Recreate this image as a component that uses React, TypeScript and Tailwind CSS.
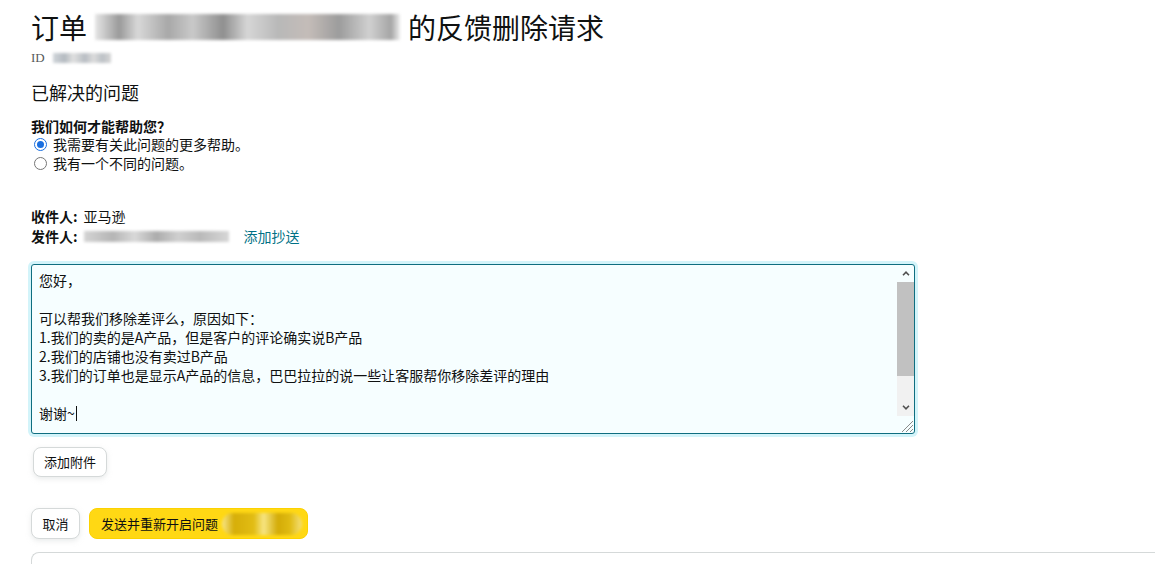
import React from 'react';

const font = { fontFamily: '"Noto Sans CJK SC", "Liberation Sans", sans-serif' };

const message = [
  '您好，',
  '',
  '可以帮我们移除差评么，原因如下：',
  '1.我们的卖的是A产品，但是客户的评论确实说B产品',
  '2.我们的店铺也没有卖过B产品',
  '3.我们的订单也是显示A产品的信息，巴巴拉拉的说一些让客服帮你移除差评的理由',
  '',
];

function Radio({ checked, label }: { checked?: boolean; label: string }) {
  return (
    <div className="flex h-[19px] items-center leading-[19px]">
      <span
        className={`ml-[3px] mr-[6px] flex h-[13px] w-[13px] items-center justify-center rounded-full bg-white ${
          checked ? 'border-[1.5px] border-[#1a6fe0]' : 'border border-[#767676]'
        }`}
      >
        {checked && <span className="h-[7px] w-[7px] rounded-full bg-[#1a6fe0]" />}
      </span>
      <span>{label}</span>
    </div>
  );
}

function Blur({ className }: { className: string }) {
  return <span className={`inline-block blur-[1.5px] ${className}`} />;
}

export default function App() {
  return (
    <div className="min-h-screen bg-white pl-[31px] pt-[9px] text-[14px] text-[#0f1111]" style={font}>
      {/* Header */}
      <h1 className="flex h-[36px] items-center text-[28px] leading-[36px] font-normal">
        <span>订单</span>
        <Blur className="mx-[8px] h-[26px] w-[305px] bg-[linear-gradient(90deg,#e6e6e6_0%,#9a9a9a_8%,#d8d8d8_14%,#a8a8a8_24%,#c9c9c9_32%,#8f8f8f_42%,#d6d6d6_50%,#b8b8b8_60%,#c4bcb8_70%,#9c9c9c_80%,#d0d0d0_90%,#a5a5a5_97%,#eeeeee_100%)]" />
        <span>的反馈删除请求</span>
      </h1>
      <div className="mt-[4px] flex h-[18px] items-center text-[#565959]" style={{ fontFamily: '"Liberation Serif", serif' }}>
        <span className="text-[13px]">ID</span>
        <Blur className="ml-[8px] h-[10px] w-[58px] bg-[linear-gradient(90deg,#d0d5da_0%,#b4bac0_20%,#e0e0e0_35%,#b8bdc3_55%,#dcdcdc_70%,#bcc1c6_85%,#d6d6d6_100%)]" />
      </div>

      <h2 className="mt-[13px] h-[24px] text-[18px] leading-[24px] font-normal">已解决的问题</h2>

      {/* Question */}
      <div className="mt-[13px] h-[18px] font-bold leading-[18px]">我们如何才能帮助您？</div>
      <Radio checked label="我需要有关此问题的更多帮助。" />
      <Radio label="我有一个不同的问题。" />

      {/* Recipients */}
      <div className="mt-[33px] leading-[20px]">
        <div className="flex h-[20px] items-center">
          <span className="font-bold">收件人:</span>
          <span className="ml-[6px]">亚马逊</span>
        </div>
        <div className="flex h-[20px] items-center">
          <span className="font-bold">发件人:</span>
          <Blur className="ml-[6px] h-[11px] w-[145px] bg-[linear-gradient(90deg,#d4d4d4_0%,#b5b5b5_20%,#d9d9d9_35%,#acacac_50%,#cfcfcf_65%,#b9b9b9_80%,#d6d6d6_100%)]" />
          <span className="ml-[15px] text-[#007185]">添加抄送</span>
        </div>
      </div>

      {/* Message box */}
      <div className="mt-[18px] flex h-[170px] w-[884px] overflow-hidden rounded-[3px] border border-[#0f6e80] bg-[#f6feff] shadow-[0_0_0_3px_#d3f4fa]">
        <div className="flex-1 pl-[7px] pt-[6px] leading-[19px]">
          {message.map((line, i) => (
            <div key={i} className="h-[19px]">
              {line}
            </div>
          ))}
          <div className="flex h-[19px] items-center">
            谢谢~<span className="ml-[1px] h-[15px] w-[1px] bg-[#0f1111]" />
          </div>
        </div>
        <div className="flex w-[17px] flex-col">
          <div className="flex h-[17px] items-center justify-center text-[#505050]">
            <svg width="8" height="5" viewBox="0 0 8 5">
              <path d="M1 4.2 4 1.2 7 4.2" fill="none" stroke="currentColor" strokeWidth="1.6" />
            </svg>
          </div>
          <div className="h-[94px] bg-[#c1c1c1]" />
          <div className="h-[23px] bg-[#f1f1f1]" />
          <div className="flex h-[17px] items-center justify-center bg-[#f1f1f1] text-[#505050]">
            <svg width="8" height="5" viewBox="0 0 8 5">
              <path d="M1 0.8 4 3.8 7 0.8" fill="none" stroke="currentColor" strokeWidth="1.6" />
            </svg>
          </div>
          <div className="flex flex-1 items-end justify-end">
            <svg width="15" height="15" viewBox="0 0 15 15" className="text-[#8a8a8a]">
              <path d="M14 3 3 14M14 7 7 14M14 11 11 14" stroke="currentColor" strokeWidth="1" />
            </svg>
          </div>
        </div>
      </div>

      {/* Attach */}
      <button className="ml-[2px] mt-[13px] h-[30px] w-[74px] rounded-lg border border-[#d5d9d9] bg-white text-[13px] shadow-[0_2px_5px_rgba(213,217,217,0.5)]">
        添加附件
      </button>

      {/* Actions */}
      <div className="mt-[31px] flex gap-[9px]">
        <button className="h-[31px] w-[49px] rounded-lg border border-[#d5d9d9] bg-white text-[13px] shadow-[0_2px_5px_rgba(213,217,217,0.5)]">
          取消
        </button>
        <button className="flex h-[31px] w-[219px] items-center rounded-lg border border-[#fcd200] bg-[#ffd814] pl-[11px] text-[13px]">
          发送并重新开启问题
          <Blur className="ml-[4px] h-[22px] w-[80px] rounded-full bg-[linear-gradient(90deg,#f8e68a_0%,#d6ae08_15%,#e2bd14_40%,#f7e582_52%,#d3ab06_70%,#e0bb12_85%,#f5e07a_100%)]" />
        </button>
      </div>

      {/* Next panel */}
      <div className="mt-[13px] h-[40px] rounded-tl-lg border-l border-t border-[#d5d9d9]" />
    </div>
  );
}
